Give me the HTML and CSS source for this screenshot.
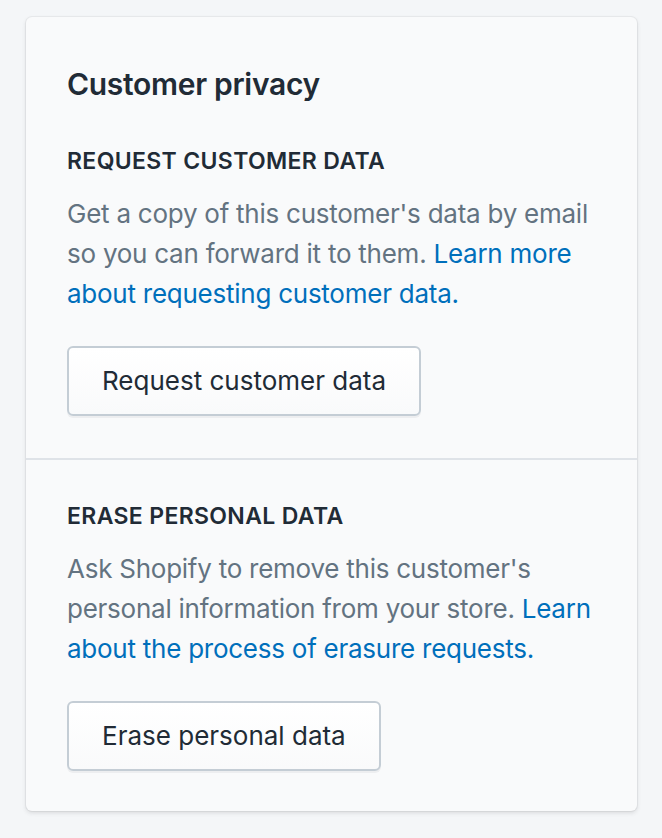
FILE: index.html
```html
<!DOCTYPE html>
<html lang="en">
<head>
<meta charset="utf-8">
<title>Customer privacy</title>
<link rel="stylesheet" href="styles.css">
</head>
<body>
<div class="page">
  <section class="card">
    <header class="card-header">
      <h2 class="card-title">Customer privacy</h2>
    </header>
    <div class="card-section">
      <h3 class="subheading">Request customer data</h3>
      <p class="body-text">Get a copy of this customer's data by email so you can forward it to them. <a class="link" href="#">Learn more about requesting customer data.</a></p>
      <button class="btn" type="button">Request customer data</button>
    </div>
    <div class="card-section card-section-divided">
      <h3 class="subheading">Erase personal data</h3>
      <p class="body-text">Ask Shopify to remove this customer's personal information from your store. <a class="link" href="#">Learn about the process of erasure requests.</a></p>
      <button class="btn" type="button">Erase personal data</button>
    </div>
  </section>
</div>
</body>
</html>
```
FILE: styles.css
```css
* { box-sizing: border-box; }
html, body {
  margin: 0;
  padding: 0;
  background: #f4f6f8;
}
body {
  font-family: Inter, "Noto Sans", sans-serif;
  color: #212b36;
}
.page {
  padding: 17px 25px 26px 26px;
}
.card {
  width: 611px;
  background: #f9fafb;
  border-radius: 6px;
  box-shadow: 0 0 0 1px rgba(63, 63, 68, 0.06), 0 2px 4px 0 rgba(63, 63, 68, 0.15);
}
.card-header {
  padding: 43px 41px 0;
}
.card-title {
  margin: 0;
  font-size: 30px;
  line-height: 48px;
  font-weight: 600;
  color: #212b36;
  letter-spacing: -0.3px;
}
.card-section {
  padding: 40px 41px 42px;
}
.card-header + .card-section {
  padding-top: 37px;
}
.card-section-divided {
  border-top: 2px solid #dfe3e8;
  padding-top: 40px;
  padding-bottom: 40px;
}
.subheading {
  margin: 0;
  font-size: 23px;
  line-height: 32px;
  font-weight: 600;
  text-transform: uppercase;
  color: #212b36;
  letter-spacing: 0.35px;
}
.body-text {
  margin: 17px 0 0;
  font-size: 26px;
  line-height: 40px;
  color: #637381;
  letter-spacing: -0.25px;
}
.link {
  color: #006fbb;
  text-decoration: none;
}
.btn {
  display: inline-block;
  margin-top: 32px;
  height: 70px;
  padding: 0 33px;
  font-family: inherit;
  font-size: 26px;
  line-height: 66px;
  color: #212b36;
  background: linear-gradient(to bottom, #ffffff, #f9fafb);
  border: 2px solid #c4cdd5;
  border-radius: 6px;
  box-shadow: 0 2px 0 0 rgba(22, 29, 37, 0.05);
  cursor: pointer;
}
```
